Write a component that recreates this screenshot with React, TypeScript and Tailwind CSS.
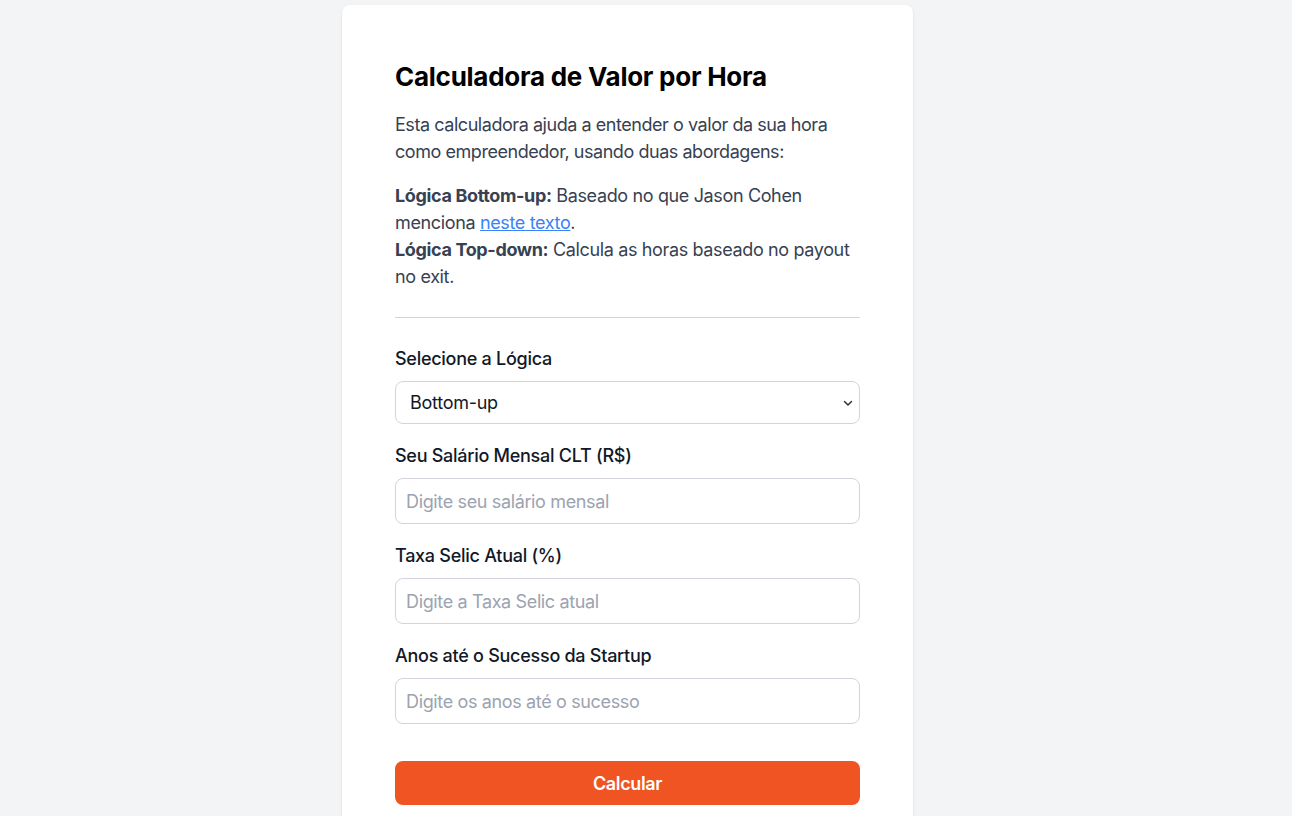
import { useState } from "react";

const fields = [
  { label: "Seu Salário Mensal CLT (R$)", placeholder: "Digite seu salário mensal" },
  { label: "Taxa Selic Atual (%)", placeholder: "Digite a Taxa Selic atual" },
  { label: "Anos até o Sucesso da Startup", placeholder: "Digite os anos até o sucesso" },
];

export default function App() {
  const [logic, setLogic] = useState("bottom-up");

  return (
    <div
      className="min-h-screen bg-[#f3f4f6] pr-[37px] pt-[5px]"
      style={{ fontFamily: "Inter, 'Noto Sans', sans-serif" }}
    >
      <div className="mx-auto w-[571px] rounded-lg bg-white px-[53px] pb-10 pt-[56px] shadow-sm">
        <h1 className="mb-[18px] text-[26px] font-bold leading-8 tracking-[-0.01em] text-black">
          Calculadora de Valor por Hora
        </h1>
        <p className="mb-[17px] text-[18px] leading-[27px] tracking-[-0.025em] text-[#374151]">
          Esta calculadora ajuda a entender o valor da sua hora como empreendedor, usando duas
          abordagens:
        </p>
        <p className="text-[18px] leading-[27px] tracking-[-0.02em] text-[#374151]">
          <strong className="font-bold">Lógica Bottom-up:</strong> Baseado no que Jason Cohen
          menciona{" "}
          <a href="#" className="text-[#3b82f6] underline">
            neste texto
          </a>
          .
          <br />
          <strong className="font-bold">Lógica Top-down:</strong> Calcula as horas baseado no
          payout no exit.
        </p>

        <hr className="mb-[27px] mt-[27px] border-t border-[#d1d5db]" />

        <label className="mb-[9px] block text-[18px] font-medium leading-[27px] tracking-[-0.015em] text-[#111827]">
          Selecione a Lógica
        </label>
        <div className="relative mb-[18px]">
          <select
            value={logic}
            onChange={(e) => setLogic(e.target.value)}
            className="block h-[43px] w-full appearance-none rounded-lg border border-[#d1d5db] bg-white pl-[14px] text-[18px] tracking-[-0.015em] text-[#111827] outline-none"
          >
            <option value="bottom-up">Bottom-up</option>
            <option value="top-down">Top-down</option>
          </select>
          <svg
            className="pointer-events-none absolute right-[6px] top-1/2 h-3 w-3 -translate-y-1/2 text-[#333]"
            viewBox="0 0 12 12"
            fill="none"
            stroke="currentColor"
            strokeWidth="1.5"
            strokeLinecap="round"
            strokeLinejoin="round"
          >
            <path d="M2.5 4.5 6 8l3.5-3.5" />
          </svg>
        </div>

        {fields.map((field) => (
          <div key={field.label} className="mb-[18px] last:mb-0">
            <label className="mb-[9px] block text-[18px] font-medium leading-[27px] tracking-[-0.015em] text-[#111827]">
              {field.label}
            </label>
            <input
              type="text"
              placeholder={field.placeholder}
              className="block h-[46px] w-full rounded-lg border border-[#d1d5db] bg-white px-[10px] text-[18px] tracking-[-0.02em] text-[#111827] outline-none placeholder:text-[#9ca3af]"
            />
          </div>
        ))}

        <button
          type="button"
          className="mt-[37px] block h-[44px] w-full rounded-lg bg-[#f05423] text-[18px] font-semibold tracking-[-0.02em] text-white"
        >
          Calcular
        </button>
      </div>
    </div>
  );
}
